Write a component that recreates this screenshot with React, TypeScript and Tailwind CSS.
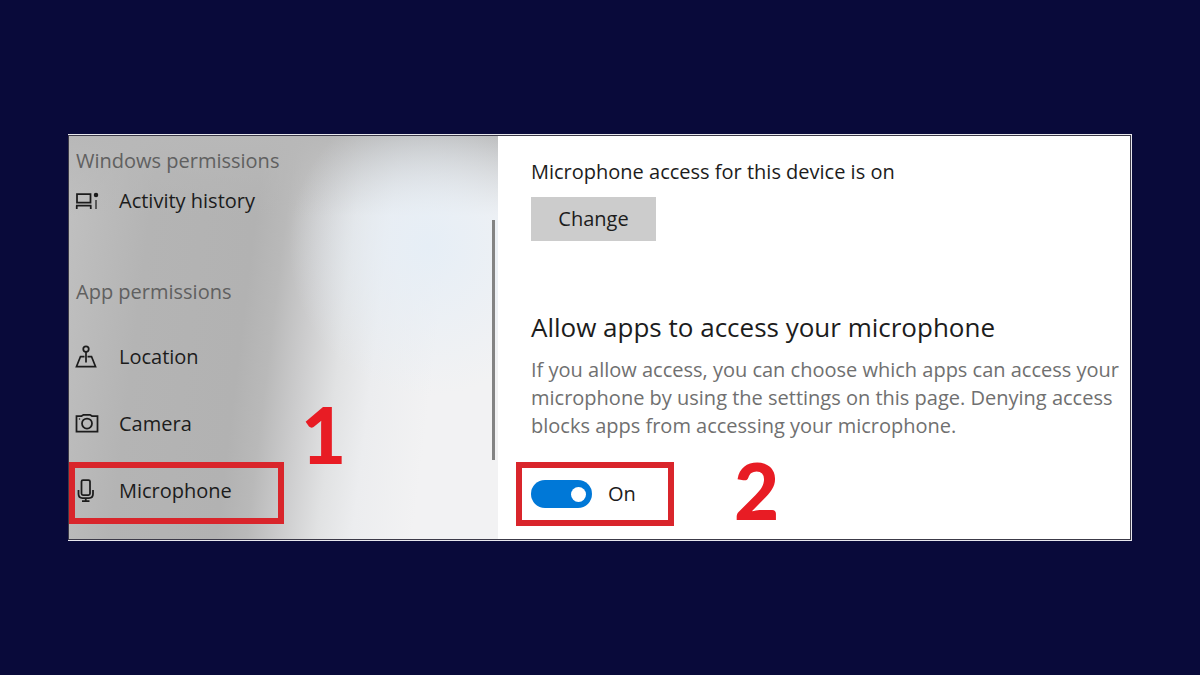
import { useState, type ReactNode } from 'react';
import clsx from 'clsx';

interface NavItemProps {
  icon: ReactNode;
  label: string;
  highlighted?: boolean;
}

const iconProps = {
  width: 24,
  height: 24,
  viewBox: '0 0 24 24',
  fill: 'none',
  stroke: 'currentColor',
  strokeWidth: 1.75,
  'aria-hidden': true,
};

function ActivityIcon() {
  return (
    <svg {...iconProps}>
      <path d="M2 5H15.5V13.5H2Z" />
      <path d="M1 16.5H16.5M1.75 20V16.5M15.75 20V16.5" />
      <path d="M21 11V20" strokeOpacity={0.7} />
      <circle cx="21" cy="6" r="2.25" fill="currentColor" stroke="none" />
    </svg>
  );
}

function LocationIcon() {
  return (
    <svg {...iconProps}>
      <circle cx="11" cy="4" r="2.75" />
      <path d="M11 6.75V17.5" />
      <path d="M9.5 11.5H5.5L1.5 21.5H20.5L16.5 11.5H12.5" />
    </svg>
  );
}

function CameraIcon() {
  return (
    <svg {...iconProps}>
      <path d="M1.5 4H6.5L8.5 2.75H15L17 4H22.5V19.5H1.5Z" />
      <circle cx="12" cy="11.5" r="5" />
      <circle cx="4.5" cy="7" r="0.75" fill="currentColor" stroke="none" />
    </svg>
  );
}

function MicrophoneIcon() {
  return (
    <svg {...iconProps}>
      <rect x="6.5" y="1" width="8.5" height="15" rx="1.5" />
      <path d="M3.5 11V15C3.5 17.5 5 19 7.5 19H14C16.5 19 18 17.5 18 15V11" />
      <path d="M10.75 19V22M7 22H14.5" />
    </svg>
  );
}

function NavItem({ icon, label, highlighted }: NavItemProps) {
  return (
    <a
      href="#"
      className={clsx(
        'flex items-center gap-5 text-xl text-[#1c1c1c]',
        highlighted
          ? 'h-[62px] w-[215px] border-6 border-[#d9252b] pb-1'
          : 'h-7 pl-1.5',
      )}
    >
      {icon}
      {label}
    </a>
  );
}

function Sidebar() {
  return (
    <nav className="relative w-[429px] shrink-0 bg-[radial-gradient(ellipse_140px_150px_at_360px_110px,#e6eef6_0%,#e6eef600_100%),linear-gradient(180deg,#b8b8b8_0px,#b8b8b800_80px),linear-gradient(97deg,#c1c1c1_0px,#b4b4b4_90px,#b2b2b2_195px,#b9b9b9_225px,#cdcdce_260px,#e1e2e3_295px,#ecedef_330px,#f2f2f3_390px)] pt-[11px]">
      <h2 className="pl-[7px] text-xl leading-7 text-[#606060]">Windows permissions</h2>
      <div className="mt-3">
        <NavItem icon={<ActivityIcon />} label="Activity history" />
      </div>
      <h2 className="mt-[63px] pl-[7px] text-xl leading-7 text-[#606060]">App permissions</h2>
      <div className="mt-[37px] flex flex-col gap-[39px]">
        <NavItem icon={<LocationIcon />} label="Location" />
        <NavItem icon={<CameraIcon />} label="Camera" />
      </div>
      <div className="mt-6">
        <NavItem icon={<MicrophoneIcon />} label="Microphone" highlighted />
      </div>
      <span className="absolute top-[259px] left-[232px] font-[Lato] text-[78px] leading-none font-black text-[#e81c24]">
        1
      </span>
      <div className="absolute top-[84px] right-[3px] h-60 w-[3px] bg-[#838383]" />
    </nav>
  );
}

export default function App() {
  const [enabled, setEnabled] = useState(true);

  return (
    <div className="flex min-h-screen items-center justify-center bg-[#090a3a] px-[68px] font-['Open_Sans',sans-serif]">
      <div className="w-full border border-l-0 border-[#e8e8ee]">
        <div className="flex border border-[#3c3a48]">
          <Sidebar />
          <main className="relative min-w-0 flex-1 bg-white pb-[13px] pl-[18px]">
            <section className="pt-[22px] pl-[15px]">
              <p className="text-xl leading-7 text-[#1c1c1c]">Microphone access for this device is on</p>
              <button className="mt-[11px] h-11 w-[125px] bg-[#cccccc] text-xl text-[#1c1c1c]">Change</button>
            </section>
            <section className="mt-[70px] pl-[15px]">
              <h1 className="text-[26px] leading-8 text-[#1c1c1c]">Allow apps to access your microphone</h1>
              <p className="mt-[13px] text-xl leading-7 text-[#707070]">
                If you allow access, you can choose which apps can access your
                <br />
                microphone by using the settings on this page. Denying access
                <br />
                blocks apps from accessing your microphone.
              </p>
            </section>
            <label className="mt-[22px] flex h-16 w-[158px] items-center gap-4 border-6 border-[#d9252b] pl-[9px] text-xl text-[#1c1c1c]">
              <input
                type="checkbox"
                role="switch"
                checked={enabled}
                onChange={(e) => setEnabled(e.target.checked)}
                className="flex h-7 w-[61px] shrink-0 appearance-none items-center rounded-full bg-[#8a8a8a] px-1.5 before:size-[15px] before:rounded-full before:bg-white checked:justify-end checked:bg-[#0078d7]"
              />
              {enabled ? 'On' : 'Off'}
            </label>
            <span className="absolute top-[315px] left-[236px] font-[Lato] text-[78px] leading-none font-black text-[#e81c24]">
              2
            </span>
          </main>
        </div>
      </div>
    </div>
  );
}
